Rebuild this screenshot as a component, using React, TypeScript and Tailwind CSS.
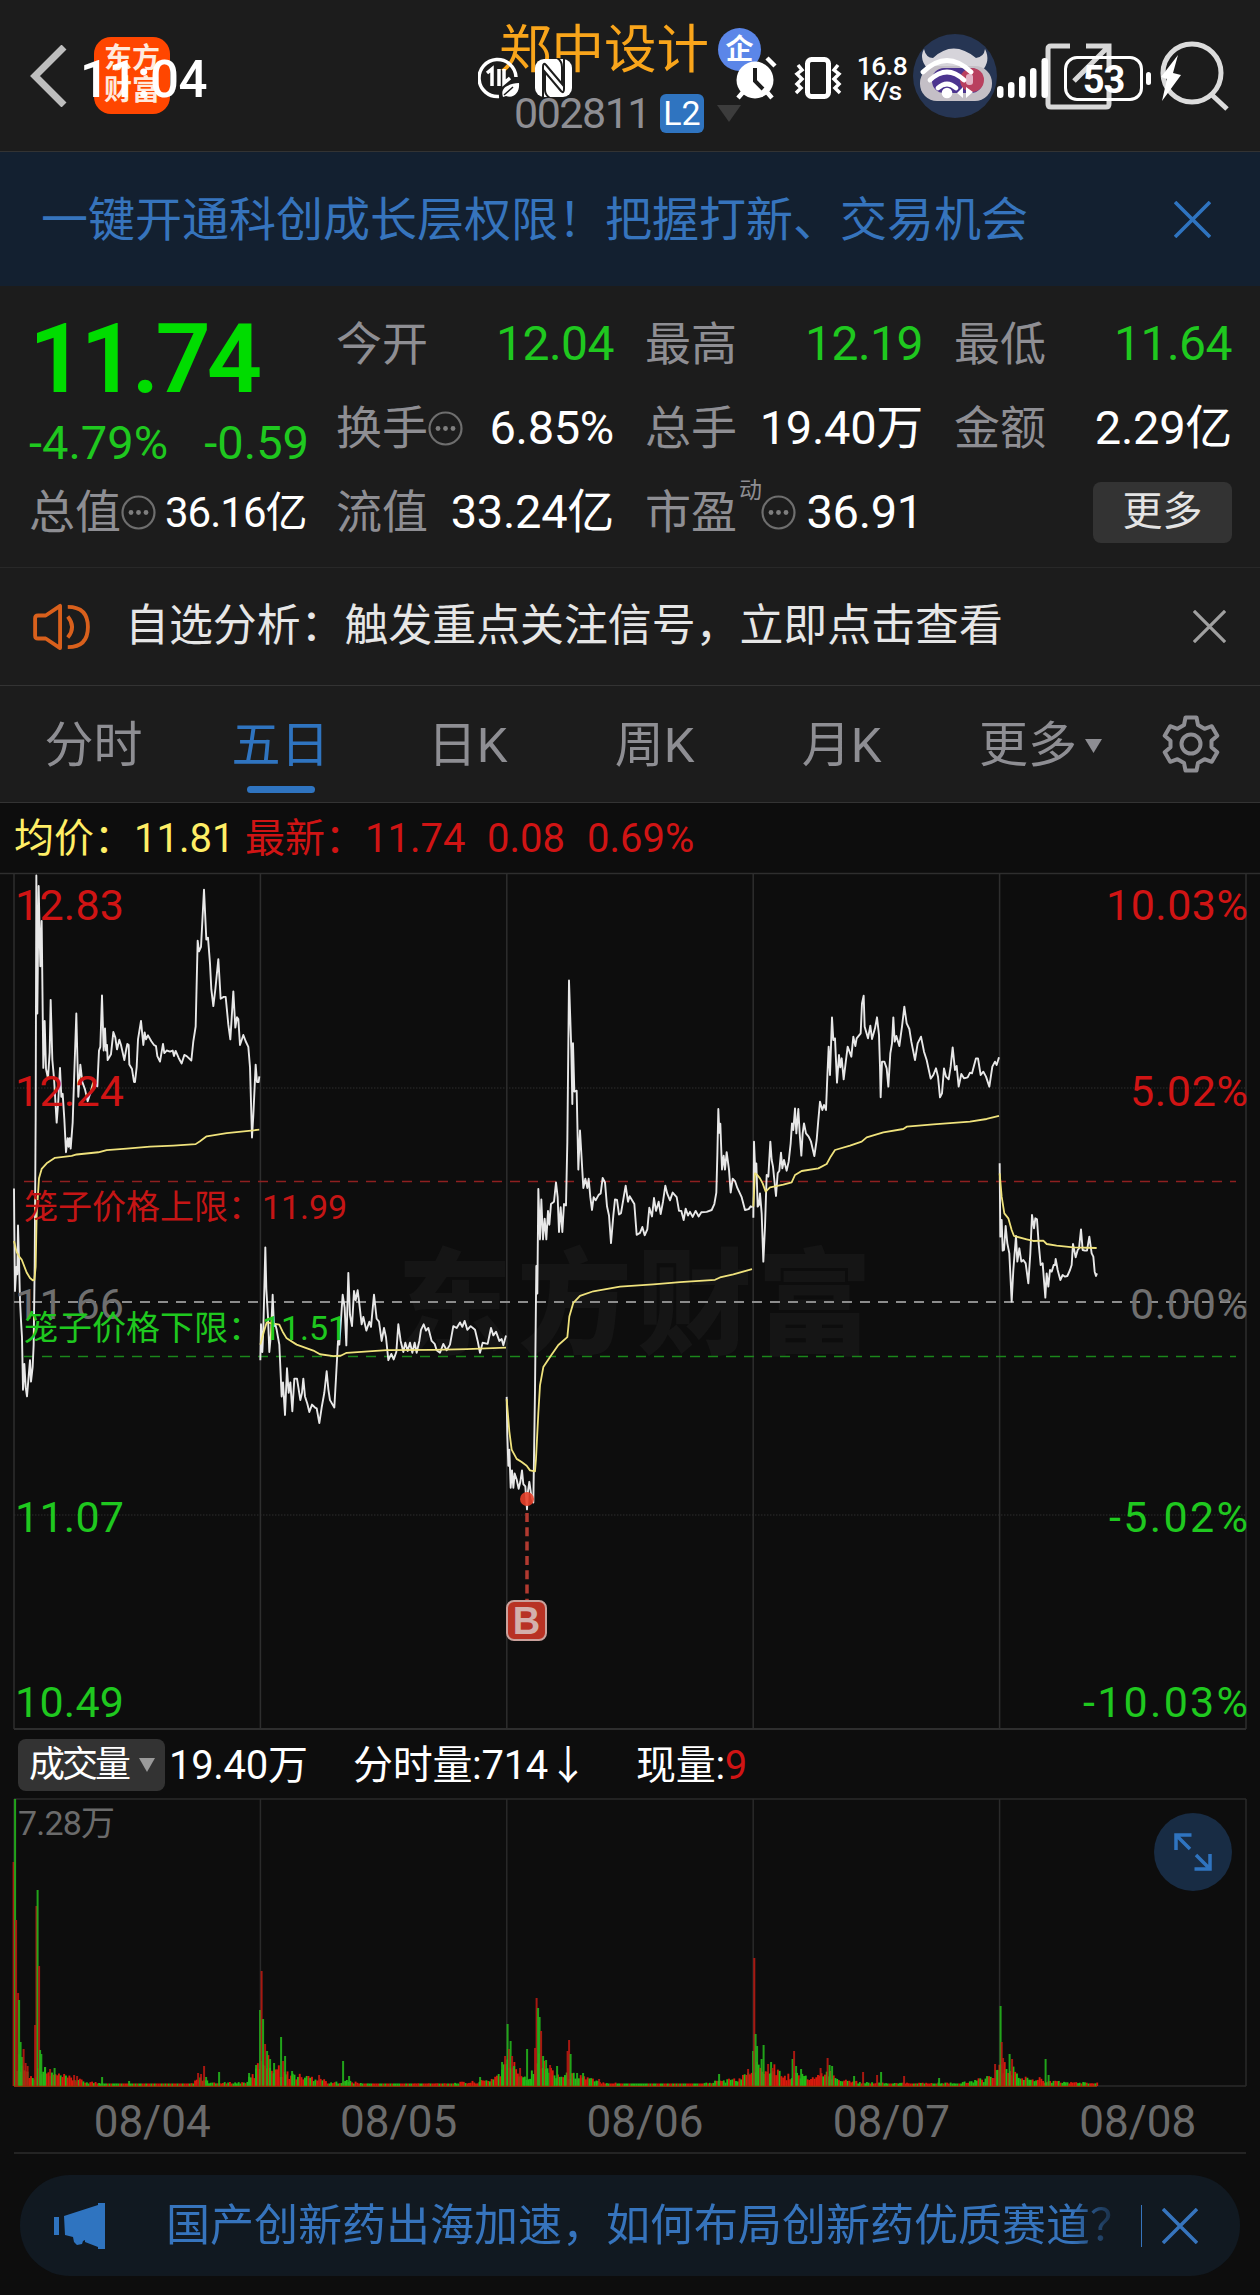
import type { ReactNode } from "react";

const RED = "#d01414";
const GREEN = "#1fc81f";

// day separators of the five-day chart
const DAY_X = [14, 260.4, 506.8, 753.2, 999.6, 1246];

// one entry per trading day: price line, average line and its unit transform
const DAYS = [
  {
    transform: "translate(0 860) scale(0.33333 0.36995)",
    price:
      "42,888 43,1000 45,1165 49,1100 52,1120 54,988 57,1080 60,1190 63,1245 66,1290 69,1432 73,1362 77,1425 81,1450 86,1395 90,1352 93,1410 98,1370 101,1310 104,1100 107,700 109,42 112,415 116,70 121,287 125,165 130,562 134,435 138,565 144,590 149,520 152,378 157,540 162,590 170,710 175,650 180,562 184,640 188,632 193,700 198,790 203,752 206,775 209,752 212,780 218,710 222,600 229,415 232,530 235,640 241,553 247,600 255,620 263,652 271,630 280,600 292,612 297,515 301,505 306,366 311,515 315,455 318,515 321,500 323,541 333,525 340,465 346,480 351,512 358,486 363,500 373,541 379,510 382,497 386,500 388,553 396,565 402,600 405,600 410,560 414,485 423,435 430,500 434,466 438,485 444,474 454,490 462,500 468,503 472,530 480,545 489,497 493,522 500,515 510,518 518,515 522,530 527,516 536,535 545,550 553,527 560,530 574,542 580,490 587,450 593,218 597,247 603,235 612,80 619,215 624,210 630,280 634,350 640,395 646,350 655,268 662,375 671,370 677,370 685,445 691,485 700,355 706,453 711,425 715,430 720,500 730,473 737,490 745,505 750,560 756,750 760,690 767,553 771,600 776,600 778,585",
    avg: "42,1030 50,1060 60,1075 65,1080 80,1115 90,1130 98,1136 103,1135 107,1100 110,960 117,860 125,835 140,820 165,805 215,800 230,796 295,790 320,784 380,780 450,775 520,772 587,768 600,760 620,747 680,738 778,729",
  },
  {
    transform: "translate(0 860) scale(0.33333 0.36995)",
    price:
      "781,1352 783,1255 787,1330 790,1270 796,1047 799,1160 804,1235 808,1330 813,1280 818,1175 822,1260 826,1255 830,1270 838,1310 845,1450 849,1412 855,1500 861,1374 866,1440 871,1412 877,1490 883,1402 891,1402 895,1425 901,1460 906,1440 910,1402 915,1450 922,1470 928,1492 936,1472 945,1480 950,1482 958,1522 965,1480 973,1440 980,1382 985,1430 990,1460 1003,1480 1008,1400 1014,1300 1018,1310 1028,1175 1034,1210 1039,1312 1045,1116 1050,1230 1056,1260 1062,1165 1067,1190 1073,1163 1078,1200 1085,1255 1090,1235 1099,1272 1108,1248 1113,1262 1122,1175 1130,1240 1137,1248 1145,1300 1152,1265 1158,1290 1165,1352 1174,1335 1181,1350 1189,1330 1195,1255 1202,1300 1210,1330 1216,1305 1223,1327 1230,1305 1237,1332 1244,1305 1250,1332 1258,1300 1263,1270 1271,1255 1278,1272 1285,1265 1295,1300 1304,1308 1310,1325 1320,1332 1330,1308 1340,1325 1350,1310 1360,1260 1370,1265 1380,1250 1387,1262 1394,1246 1402,1270 1412,1260 1425,1270 1433,1300 1440,1332 1448,1305 1463,1308 1473,1265 1480,1285 1488,1275 1498,1300 1505,1295 1510,1312 1518,1285",
    avg: "781,1310 790,1280 800,1250 838,1256 848,1275 860,1293 890,1310 940,1326 960,1336 1000,1341 1022,1340 1040,1332 1160,1325 1300,1324 1400,1322 1518,1318",
  },
  {
    transform: "translate(480 940) scale(0.33333 0.45918)",
    price:
      "80,995 82,1080 85,1145 88,1110 92,1193 96,1155 100,1193 104,1162 110,1175 116,1195 121,1180 126,1155 130,1185 136,1190 141,1240 144,1200 148,1180 153,1205 160,1225 165,980 169,710 172,770 175,542 180,652 184,565 189,652 194,607 199,652 204,590 208,620 213,575 222,570 228,528 233,560 237,636 242,582 247,636 252,575 258,578 262,440 267,88 274,240 277,357 279,225 283,330 290,328 295,500 300,415 310,540 316,520 322,540 326,520 331,560 336,588 341,560 347,567 356,555 362,552 368,518 375,528 381,580 387,600 393,660 400,600 405,565 411,566 417,598 423,595 430,565 437,535 444,570 449,558 463,575 470,642 480,638 487,625 494,643 502,630 508,583 516,602 522,562 528,590 536,570 542,597 549,570 556,535 562,553 570,567 578,550 590,560 597,590 604,590 611,610 617,585 624,600 630,592 638,603 647,590 656,602 664,593 680,592 695,588 703,575 709,550 712,470 715,368 718,420 721,400 726,500 731,470 735,500 740,462 747,500 752,550 758,520 765,525 772,540 785,560 795,588 806,586 812,580 818,582",
    avg: "80,1000 88,1070 95,1110 110,1130 125,1137 140,1145 150,1155 165,1157 168,1130 175,1030 180,970 190,930 210,908 235,882 262,865 268,820 280,790 300,775 340,765 420,755 520,750 600,745 705,740 720,735 760,728 800,720 816,717",
  },
  {
    transform: "translate(740 960) scale(0.33333)",
    price:
      "40,773 42,545 46,640 49,610 53,740 57,735 60,700 65,760 70,905 75,800 80,645 85,650 91,545 95,600 99,620 103,660 108,708 113,640 118,632 123,578 127,625 132,600 140,632 146,605 152,550 156,490 160,510 165,445 169,520 175,447 179,520 184,587 188,520 192,490 198,520 206,530 213,545 223,588 230,540 235,480 240,425 247,450 252,435 258,450 262,350 266,260 270,345 276,172 280,240 285,235 291,368 297,285 301,322 305,295 311,358 318,300 323,260 334,290 340,230 346,258 350,235 362,220 366,130 371,107 374,200 384,235 391,197 396,237 405,205 411,172 417,225 420,320 422,412 426,305 433,305 440,325 445,380 451,280 456,250 460,172 464,245 469,228 478,258 486,200 493,140 500,190 508,207 514,245 525,300 533,250 543,230 552,275 560,300 572,356 580,345 588,325 594,350 600,412 606,400 612,325 618,350 626,358 632,320 638,262 645,330 650,318 656,380 664,342 672,355 683,352 690,338 696,340 708,295 714,295 722,345 730,335 738,350 748,380 757,320 765,305 770,315 777,292",
    avg: "40,740 45,640 52,645 60,655 68,670 77,695 90,682 130,674 155,667 165,645 185,633 235,625 260,612 272,590 285,570 330,557 365,545 380,532 430,517 490,507 500,500 580,493 690,485 740,477 777,468",
  },
  {
    transform: "translate(740 960) scale(0.33333)",
    price:
      "779,610 781,830 785,780 788,872 792,870 797,798 802,850 808,880 815,1025 820,930 828,828 832,905 838,865 844,905 850,900 857,910 865,970 871,880 876,765 882,805 886,775 891,778 896,850 902,915 908,910 916,1013 920,940 925,980 930,930 935,935 941,915 945,915 947,897 953,930 961,960 968,945 975,950 982,948 990,930 995,915 999,852 1007,892 1013,870 1017,865 1023,808 1028,870 1035,872 1041,872 1048,830 1055,880 1060,890 1064,935 1068,948 1071,940",
    avg: "779,640 785,710 793,760 805,775 815,810 822,828 860,838 880,843 910,842 920,852 950,857 1000,862 1070,864",
  },
];

const LEFT_LABELS = [
  { text: "12.83", y: 920, color: RED },
  { text: "12.24", y: 1105.5, color: RED },
  { text: "11.66", y: 1318.5, color: "#6f6f6f" },
  { text: "11.07", y: 1532, color: GREEN },
  { text: "10.49", y: 1716.5, color: GREEN },
];

const RIGHT_LABELS = [
  { text: "10.03%", y: 920, w: 142, color: RED },
  { text: "5.02%", y: 1105.5, w: 118, color: RED },
  { text: "0.00%", y: 1318.5, w: 118, color: "#6f6f6f" },
  { text: "-5.02%", y: 1532, w: 139, color: GREEN },
  { text: "-10.03%", y: 1716.5, w: 165, color: GREEN },
];

// [x, typical height] of the small bars
const ENVELOPE = [
  [18, 30], [22, 24], [32, 9], [40, 20], [50, 14], [70, 9], [85, 5], [105, 3], [130, 2], [190, 2], [200, 8],
  [212, 3], [245, 4], [255, 14], [262, 34], [275, 22], [285, 14], [300, 11], [320, 9], [330, 3], [345, 6],
  [360, 3], [375, 2], [450, 3], [480, 5], [490, 7], [500, 15], [505, 24], [512, 26], [520, 14], [530, 9], [536, 34],
  [545, 22], [560, 12], [580, 12], [600, 4], [640, 2], [700, 2], [720, 6], [740, 8], [750, 16], [760, 24],
  [775, 22], [785, 10], [800, 14], [810, 8], [830, 14], [845, 6], [880, 3], [960, 3], [985, 8], [1000, 20],
  [1010, 22], [1020, 9], [1040, 8], [1050, 5], [1098, 3],
];

// [x, height, up?]
const SPIKES = [
  [13.5, 224, 1], [15, 287, 0], [16, 166, 1], [18, 93, 1], [19, 86, 0], [20.5, 44, 0], [22, 29, 0], [23.5, 37, 1],
  [25.5, 23, 1], [27.5, 20, 1], [35, 61, 1], [36.4, 180, 1], [37.5, 196, 0], [39, 120, 1], [40, 36, 0], [41.2, 32, 0],
  [45, 19, 0], [50, 17, 1], [54.5, 18, 0], [74, 11, 1], [77, 10, 1], [102, 9, 0], [129, 5, 0], [198, 13, 1],
  [201, 12, 1], [204, 20, 1], [206, 9, 0], [219, 14, 0], [249, 13, 0], [256, 21, 0], [260, 76, 0], [261.5, 115, 1],
  [263, 67, 0], [265, 42, 1], [267, 35, 0], [270, 27, 0], [274, 23, 0], [281, 49, 0], [283, 25, 1], [285, 30, 0],
  [292, 15, 0], [319, 11, 1], [343, 25, 0], [349, 10, 0], [480, 9, 0], [502, 24, 0], [505, 30, 1], [507.5, 62, 0],
  [509, 37, 1], [510.5, 45, 0], [512, 30, 1], [514, 20, 0], [520, 18, 1], [527, 37, 0], [535, 38, 1], [536.5, 88, 1],
  [538, 78, 0], [539.5, 69, 0], [541, 55, 1], [543, 30, 0], [546, 26, 0], [550, 21, 1], [557, 20, 0], [567.5, 35, 1],
  [569, 46, 1], [570.5, 32, 0], [577, 13, 0], [583, 13, 0], [599, 7, 1], [719, 12, 0], [748, 17, 1], [753, 35, 0],
  [754.2, 128, 1], [755.5, 52, 0], [757, 40, 0], [761.5, 27, 0], [763.5, 41, 0], [768, 22, 1], [771, 24, 0],
  [772.5, 18, 1], [792.5, 27, 0], [794, 35, 1], [796, 20, 0], [801, 17, 0], [820.5, 18, 1], [827.5, 28, 1],
  [829.5, 21, 0], [832, 20, 0], [854, 10, 0], [863, 14, 1], [877, 11, 1], [881, 14, 0], [904, 10, 1], [939, 8, 0],
  [987, 10, 0], [995, 22, 1], [1000.5, 80, 0], [1001.6, 44, 1], [1003, 28, 1], [1009.5, 32, 0], [1012, 27, 1],
  [1045.5, 27, 0], [1048.5, 11, 0],
];

function envelopeAt(x: number) {
  for (let i = 1; i < ENVELOPE.length; i++) {
    const [x0, h0] = ENVELOPE[i - 1];
    const [x1, h1] = ENVELOPE[i];
    if (x <= x1) return h0 + ((h1 - h0) * Math.max(0, x - x0)) / (x1 - x0);
  }
  return 2;
}

const smallBars = Array.from({ length: 620 }, (_, i) => {
  const x = 17 + i * 1.745;
  const r = Math.abs(Math.sin(i * 12.9898) * 43758.5453) % 1;
  const c = Math.abs(Math.sin(i * 78.233) * 12543.123) % 1;
  return [x, Math.max(2.5, envelopeAt(x) * (0.5 + r * 0.65)), c > 0.48 ? 1 : 0];
});

const TABS = ["分时", "五日", "日K", "周K", "月K", "更多"];
const DATES = ["08/04", "08/05", "08/06", "08/07", "08/08"];

function CloseIcon({ size, color }: { size: number; color: string }) {
  return (
    <svg className="shrink-0" width={size} height={size} viewBox="0 0 36 36" fill="none" stroke={color} strokeWidth="3.500">
      <path d="M1 1 35 35M35 1 1 35" />
    </svg>
  );
}

function DotsIcon() {
  return (
    <svg className="shrink-0" width="35" height="35" viewBox="0 0 35 35">
      <circle cx="17.5" cy="17.5" r="16" fill="none" stroke="#6e6e6e" strokeWidth="2.200" />
      <circle cx="10" cy="17.5" r="2.4" fill="#7e7e7e" />
      <circle cx="17.5" cy="17.5" r="2.4" fill="#7e7e7e" />
      <circle cx="25" cy="17.5" r="2.4" fill="#7e7e7e" />
    </svg>
  );
}

function Stat({ label, value, green }: { label: ReactNode; value: string; green?: boolean }) {
  return (
    <div className="flex h-[84px] items-center justify-between">
      <span className="flex items-center text-[46px] text-[#8e8e93]">{label}</span>
      <span className={green ? "text-[48px] tracking-[-0.5px] text-[#1fc81f]" : "text-[47px] tracking-[-0.3px] text-white"}>
        {value}
      </span>
    </div>
  );
}

function StatusBar() {
  return (
    <div className="absolute left-0 top-0 flex h-[156px] w-full items-center text-white">
      <span className="ml-[80px] mt-[5px] w-[130px] text-[51px] font-medium tracking-[-0.5px]">11:04</span>
      <svg className="ml-[268px]" width="42" height="42" viewBox="0 0 42 42" fill="none" stroke="#fff">
        <path d="M38 20A18.500 18.500 0 1 0 21 39.500" strokeWidth="3.500" />
        <path d="M9 16l5-4v17M21 12v17M26 12v14l6-5" strokeWidth="3.500" />
        <path d="M25 40c-3-9 4-13 16-14 1 9-5 16-13 13z" fill="#fff" stroke="none" />
        <path d="M26 38l9-8" stroke="#1c1c1c" strokeWidth="1.500" />
      </svg>
      <svg className="ml-[15px]" width="38" height="40" viewBox="0 0 38 40">
        <rect x="0" y="1" width="37" height="38" rx="9" fill="#fff" />
        <path d="M8 40V9q0-5 3-2l16 19V9q0-6-5-9M29 0v31q0 5-3 2L10 14v18q0 5 5 8" fill="none" stroke="#1c1c1c" strokeWidth="2" />
      </svg>
      <svg className="ml-[163px]" width="42" height="50" viewBox="0 0 42 50">
        <circle cx="19" cy="27" r="18.500" fill="#fff" />
        <path d="M19 15v13l8 8" fill="none" stroke="#1c1c1c" strokeWidth="4" />
        <path d="M8 38l-6 7M30 38l6 7M31 5l8 8" stroke="#fff" strokeWidth="4.500" />
      </svg>
      <svg className="ml-[15px]" width="50" height="42" viewBox="0 0 50 42" fill="none" stroke="#fff">
        <rect x="14.500" y="2.500" width="21" height="37" rx="4" strokeWidth="5" />
        <path d="M5 8l4 5-5 4 5 5-5 5 4 4-5 5M45 8l-4 5 5 4-5 5 5 5-4 4 5 5" strokeWidth="3.500" />
      </svg>
      <div className="ml-[13px] flex w-[52px] flex-col items-center whitespace-nowrap text-[26.500px] font-medium leading-[25px] tracking-[-0.5px]">
        <span>16.8</span>
        <span>K/s</span>
      </div>
      <svg className="ml-[12px]" width="54" height="44" viewBox="0 0 54 44" fill="none" stroke="#fff">
        <path d="M3 16q24-23 48 0" strokeWidth="4.800" strokeLinecap="round" />
        <path d="M10 24q17-16 34 0" strokeWidth="4.800" strokeLinecap="round" />
        <path d="M18 32q9-8 18 0" strokeWidth="4.800" strokeLinecap="round" />
        <circle cx="27" cy="37" r="5.300" fill="#fff" stroke="none" />
        <path d="M43 31v11l-6-5zM46 31v11l7-6z" fill="#fff" stroke="none" />
      </svg>
      <svg className="ml-[23px]" width="51" height="40" viewBox="0 0 51 40" fill="#fff">
        <rect x="0" y="28" width="6.500" height="12" rx="3.200" />
        <rect x="11" y="24" width="6.500" height="16" rx="3.200" />
        <rect x="22" y="18" width="6.500" height="22" rx="3.200" />
        <rect x="33" y="10" width="6.500" height="30" rx="3.200" />
        <rect x="44.500" y="0" width="6.500" height="40" rx="3.200" />
      </svg>
      <div className="ml-[16px] flex h-[45px] w-[79px] items-center justify-center rounded-[13px] border-[3px] border-white pt-[3px] text-[38px] font-bold leading-[38px] tracking-[-1px]">
        53
      </div>
      <div className="ml-[3px] h-[13px] w-[5px] rounded-[3px] bg-white" />
      <svg className="ml-[9px]" width="21" height="46" viewBox="0 0 21 46" fill="#fff">
        <path d="M18 0 1 22l6 2-5 22 19-26-8-2z" />
      </svg>
    </div>
  );
}

function Header() {
  return (
    <div className="relative h-[152px] border-b border-[#333] bg-[#1c1c1c]">
      <div className="flex h-[151px] items-center">
        <svg className="ml-[30px]" width="38" height="62" viewBox="0 0 38 62" fill="none" stroke="#bdbdbd" strokeWidth="7">
          <path d="M34 2 5 31 34 60" />
        </svg>
        <div className="ml-[26px] flex h-[77px] w-[76px] flex-col items-center justify-center rounded-[17px] bg-[#ff4600] pb-[2px] text-[28px] font-bold leading-[32px] text-[#ffeadd]">
          <span>东方</span>
          <span>财富</span>
        </div>
        <div className="ml-[319px] flex w-[290px] flex-col">
          <div className="flex h-[72px] items-center pl-[10px]">
            <span className="text-[52.500px] leading-[60px] text-[#f9a51b]">郑中设计</span>
            <span className="ml-[9px] flex h-[43px] w-[43px] items-center justify-center rounded-full bg-[#5b86e8] text-[28px] font-bold leading-[40px] text-white">
              企
            </span>
          </div>
          <div className="flex h-[52px] items-center pl-[25px]">
            <span className="mt-[3px] w-[137px] text-[43px] tracking-[-1.5px] text-[#8e8e93]">002811</span>
            <span className="ml-[9px] mt-[3px] flex h-[39px] w-[44px] items-center justify-center rounded-[6px] bg-[#2f74c0] text-[34px] leading-[39px] text-white">
              L2
            </span>
            <svg className="ml-[13px] mt-[4px]" width="24" height="17" viewBox="0 0 24 17">
              <path d="M0 0h24L12 17z" fill="#3c3c3c" />
            </svg>
          </div>
        </div>
        <svg className="ml-[134px]" width="84" height="84" viewBox="0 0 84 84">
          <circle cx="42" cy="42" r="42" fill="#263553" />
          <path d="M17 37Q5 26 11 15q2 9 9 9 20-19 43 0 8-1 9-9 6 12-3 22z" fill="#d6d4da" />
          <rect x="7" y="32" width="72" height="35" rx="17" fill="#c4bfc6" />
          <rect x="19" y="34" width="51" height="25" rx="12" fill="#4c348f" />
          <ellipse cx="59" cy="46" rx="12" ry="12" fill="#b9405f" />
          <rect x="53" y="40" width="7" height="11" rx="3" fill="#e2b4c6" />
        </svg>
        <svg className="ml-[47px]" width="68" height="68" viewBox="0 0 68 68" fill="none" stroke="#d8d8d8" strokeWidth="5">
          <path d="M26 4H7q-3 0-3 3v55q0 3 3 3h55q3 0 3-3V44" />
          <path d="M42 4h23v23M65 4 30 39" />
        </svg>
        <svg className="ml-[48px]" width="70" height="70" viewBox="0 0 70 70" fill="none" stroke="#dcdcdc" strokeWidth="5">
          <circle cx="32" cy="32" r="29" />
          <path d="M52 54 67 68" />
        </svg>
      </div>
      <StatusBar />
    </div>
  );
}

function Quote() {
  return (
    <div className="flex h-[282px] border-b border-[#282828] bg-[#1c1c1c] pt-[16px]">
      <div className="w-[309px] pl-[29px]">
        <div className="h-[108px] text-[97px] font-semibold leading-[114px] tracking-[-4px] text-[#00dc00]">11.74</div>
        <div className="flex h-[66px] items-center justify-between whitespace-nowrap text-[47px] text-[#1fc81f]">
          <span>-4.79%</span>
          <span>-0.59</span>
        </div>
        <div className="flex h-[72px] items-center whitespace-nowrap">
          <span className="text-[46px] text-[#8e8e93]">总值</span>
          <DotsIcon />
          <span className="ml-[9px] text-[42px] tracking-[-1px] text-white">36.16亿</span>
        </div>
      </div>
      <div className="ml-[27px] grid w-[896px] grid-cols-3 gap-x-[31px] self-start">
        <Stat label="今开" value="12.04" green />
        <Stat label="最高" value="12.19" green />
        <Stat label="最低" value="11.64" green />
        <Stat
          label={
            <>
              换手
              <DotsIcon />
            </>
          }
          value="6.85%"
        />
        <Stat label="总手" value="19.40万" />
        <Stat label="金额" value="2.29亿" />
        <Stat label="流值" value="33.24亿" />
        <Stat
          label={
            <>
              市盈
              <span className="-mr-px mb-[42px] ml-[2px] text-[23px] leading-[24px]">动</span>
              <DotsIcon />
            </>
          }
          value="36.91"
        />
        <div className="flex h-[84px] items-center justify-end">
          <button className="h-[61px] w-[139px] rounded-[8px] bg-[#333] text-[40px] leading-[56px] text-[#e4e4e4]">更多</button>
        </div>
      </div>
    </div>
  );
}

function Tabs() {
  return (
    <div className="flex h-[117px] items-center border-b border-[#333] bg-[#1c1c1c]">
      {TABS.map((tab) => {
        const active = tab === "五日";
        return (
          <div key={tab} className="relative flex h-full w-[187px] items-center justify-center pt-[4px]">
            <span className={active ? "text-[49px] text-[#2f74c0]" : "text-[49px] text-[#8e8e93]"}>{tab}</span>
            {tab === "更多" && (
              <svg className="-mr-[24px] ml-[8px]" width="17" height="14" viewBox="0 0 17 14">
                <path d="M0 0h17L8.500 14z" fill="#8e8e93" />
              </svg>
            )}
            {active && <div className="absolute bottom-[9px] h-[7px] w-[68px] rounded-full bg-[#2f74c0]" />}
          </div>
        );
      })}
      <svg className="ml-[40px]" width="58" height="58" viewBox="0 0 58 58" fill="none" stroke="#8e8e93" strokeWidth="4">
        <path
          d="M23.500 2.500h11l1.500 7.500 6.500 3.800 7.300-2.600 5.500 9.500-5.800 5v6.600l5.800 5-5.500 9.500-7.300-2.600-6.500 3.800-1.500 7.500h-11L22 48l-6.500-3.800-7.300 2.600-5.500-9.500 5.800-5v-6.600l-5.800-5 5.500-9.500 7.300 2.600L22 10z"
          strokeLinejoin="round"
        />
        <circle cx="29" cy="29" r="9.500" />
      </svg>
    </div>
  );
}

function PriceChart() {
  return (
    <svg className="block" width="1260" height="860" viewBox="0 872 1260 860">
      <text x="397" y="1345" fontSize="115" fontWeight="900" letterSpacing="5" fill="#151515">
        东方财富
      </text>
      <g stroke="#2e2e2e" strokeWidth="1.500">
        <path d="M0 873.500H1260" />
        {DAY_X.map((x) => (
          <path key={x} d={`M${x} 873V1729`} />
        ))}
        <path d="M14 1729H1246" strokeWidth="2" />
        <path d="M14 1088H1246M14 1515H1246" strokeDasharray="1.500 1.500" strokeWidth="1" />
      </g>
      <path d="M24 1181.500H1236" stroke="#8e2020" strokeWidth="1.500" strokeDasharray="10 8" />
      <path d="M14 1302H1246" stroke="#8c8c8c" strokeWidth="2" strokeDasharray="10 8" />
      <path d="M24 1356.500H1236" stroke="#1b861b" strokeWidth="1.500" strokeDasharray="10 8" />
      {DAYS.map((day, i) => (
        <g key={i} transform={day.transform} fill="none" strokeLinejoin="round">
          <polyline points={day.price} stroke="#e8e8e8" strokeWidth="1.900" vectorEffect="non-scaling-stroke" />
          <polyline points={day.avg} stroke="#efe27c" strokeWidth="1.800" vectorEffect="non-scaling-stroke" />
        </g>
      ))}
      {LEFT_LABELS.map((l) => (
        <text key={l.text} x="15" y={l.y} fontSize="43" textLength="109" fill={l.color}>
          {l.text}
        </text>
      ))}
      {RIGHT_LABELS.map((l) => (
        <text key={l.text} x={1248 - l.w} y={l.y} fontSize="43" textLength={l.w} fill={l.color}>
          {l.text}
        </text>
      ))}
      <g fontSize="34">
        <text x="24" y="1219" fill="#c51515">笼子价格上限：</text>
        <text x="262" y="1219" textLength="85" fill="#c51515">11.99</text>
        <text x="24" y="1340" fill={GREEN}>笼子价格下限：</text>
        <text x="262" y="1340" textLength="85" fill={GREEN}>11.51</text>
      </g>
      <circle cx="527" cy="1499" r="7" fill="#e8402a" fillOpacity="0.9" />
      <path d="M527 1513V1600" stroke="#b13a30" strokeWidth="3.500" strokeDasharray="9 5.300" />
      <rect x="507" y="1601" width="39" height="39" rx="7" fill="#b83224" stroke="#c9a19c" strokeWidth="2" />
      <text x="526.500" y="1634" fontSize="38" fontWeight="700" textAnchor="middle" fill="#d3b0ac" style={{ fontFamily: "Liberation Sans, sans-serif" }}>
        B
      </text>
    </svg>
  );
}

function VolumeChart() {
  return (
    <div className="relative h-[289px]">
      <svg className="block" width="1260" height="289" viewBox="0 1798 1260 289">
        <g stroke="#2a2a2a" strokeWidth="1.500" fill="none">
          <path d="M14 1799H1246M14 2086H1246" />
          {DAY_X.map((x) => (
            <path key={x} d={`M${x} 1799V2086`} />
          ))}
        </g>
        {smallBars.map(([x, h, up], i) => (
          <rect key={i} x={x - 0.9} y={2086 - h} width="1.900" height={h} fill={up ? "#d81a0c" : "#22bd16"} />
        ))}
        {SPIKES.map(([x, h, up], i) => (
          <rect key={i} x={x - 0.9} y={2086 - h} width="2" height={h} fill={up ? "#b81a12" : "#24b41c"} fillOpacity="0.9" />
        ))}
        <path d="M14 2086.300H1097" stroke="#8b3208" strokeWidth="1.200" />
        <text x="18" y="1835" fontSize="34" textLength="97" fill="#6b6b6b">
          7.28万
        </text>
      </svg>
      <button className="absolute left-[1154px] top-[15px] flex h-[78px] w-[78px] items-center justify-center rounded-full bg-[#182c44]">
        <svg width="38" height="38" viewBox="0 0 38 38" fill="none" stroke="#2f74c0" strokeWidth="3.500">
          <path d="M17.500 2H2v15M2 2l14 14M20.500 36H36V21M36 36 22 22" />
        </svg>
      </button>
    </div>
  );
}

export default function App() {
  return (
    <div className="h-[2295px] w-[1260px] overflow-hidden bg-[#0d0d0d] font-['Roboto','Noto_Sans_CJK_SC',sans-serif]">
      <Header />

      <div className="flex h-[134px] items-center bg-[#132030] pl-[41px] text-[#3674bd]">
        <span className="mt-[3px] w-[1133px] whitespace-nowrap text-[47px]">一键开通科创成长层权限！把握打新、交易机会</span>
        <CloseIcon size={37} color="#2f74c0" />
      </div>

      <Quote />

      <div className="flex h-[118px] items-center border-b border-[#333] bg-[#1c1c1c] pl-[33px]">
        <svg width="58" height="48" viewBox="0 0 60 50" fill="none" stroke="#d9601c" strokeWidth="4" strokeLinejoin="round">
          <path d="M28 3v44L13 37H5q-3 0-3-3V16q0-3 3-3h8z" />
          <path d="M36 14q9 11 0 22M36 4q21 0 21 21T36 46" />
        </svg>
        <span className="ml-[34px] w-[1068px] whitespace-nowrap text-[43.900px] text-[#e6e6e6]">
          自选分析：触发重点关注信号，立即点击查看
        </span>
        <CloseIcon size={33} color="#a0a0a0" />
      </div>

      <Tabs />

      <div className="flex h-[69px] items-center whitespace-nowrap pl-[14px] pt-[2px] text-[40px] text-[#d01414]">
        <span className="w-[120px] text-[#ffee66]">均价：</span>
        <span className="w-[111px] text-[#ffee66]">11.81</span>
        <span className="w-[120px]">最新：</span>
        <span className="w-[122px]">11.74</span>
        <span className="w-[100px]">0.08</span>
        <span>0.69%</span>
      </div>

      <PriceChart />

      <div className="flex h-[66px] items-center whitespace-nowrap pl-[18px] text-[40px] tracking-[-0.3px] text-white">
        <button className="flex h-[52px] w-[147px] items-center rounded-[8px] bg-[#333] pl-[11px] text-[36px] leading-[48px] tracking-[-3px]">
          成交量
          <svg className="ml-[11px]" width="16" height="14" viewBox="0 0 16 14">
            <path d="M0 0h16L8 14z" fill="#9a9a9a" />
          </svg>
        </button>
        <span className="ml-[4px] mt-[2px] w-[184px]">19.40万</span>
        <span className="mt-[2px] w-[283px]">分时量:714↓</span>
        <span className="mt-[2px]">
          现量:<span className="text-[#d01414]">9</span>
        </span>
      </div>

      <VolumeChart />

      <div className="mx-[14px] h-[67px] border-b-2 border-[#242424]">
        <div className="ml-[15px] grid h-[68px] w-[1232px] grid-cols-5 items-center pt-[2px] text-center text-[44px] text-[#6b6b6b]">
          {DATES.map((d) => (
            <span key={d}>{d}</span>
          ))}
        </div>
      </div>

      <div className="mx-[20px] mt-[21px] flex h-[101px] items-center rounded-[50px] bg-[#111921] pl-[34px] text-[#3674bd]">
        <svg width="52" height="46" viewBox="0 0 52 46" fill="#2f74c0">
          <path d="M0 14h5v18H0zM10 13 44 2V0h7v46h-7v-2l-13-5v-2l-2 1-1 3-5 1-3-3-1-5-8-2z" />
        </svg>
        <span className="ml-[60px] w-[971px] whitespace-nowrap text-[44px] [mask-image:linear-gradient(90deg,#000_0_905px,transparent_960px)]">
          国产创新药出海加速，如何布局创新药优质赛道？
        </span>
        <div className="ml-[4px] h-[42px] w-px bg-[#3674bd]" />
        <div className="ml-[20px]">
          <CloseIcon size={36} color="#3674bd" />
        </div>
      </div>
    </div>
  );
}
